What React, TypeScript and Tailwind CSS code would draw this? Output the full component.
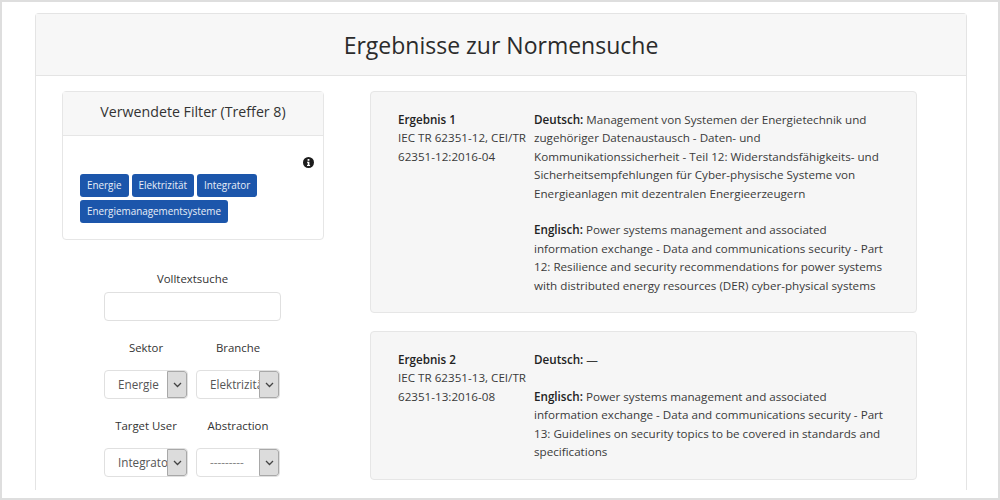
const tags = ["Energie", "Elektrizität", "Integrator", "Energiemanagementsysteme"];

function Lines({ items }: { items: string[] }) {
  return (
    <>
      {items.map((line, i) => (
        <span key={i} className="block whitespace-nowrap">
          {line}
        </span>
      ))}
    </>
  );
}

function FakeSelect({ label, value, muted }: { label: string; value: string; muted?: boolean }) {
  return (
    <div className="flex w-[84px] flex-col items-center">
      <div className="flex h-[18px] items-center whitespace-nowrap pb-[2px] text-[11.4px] text-[#333]">{label}</div>
      <div className="relative mt-[12px] h-[29px] w-[84px] overflow-hidden rounded-[4px] border border-[#e0e0e0] bg-white">
        <span className={`absolute left-[13px] top-[5px] whitespace-nowrap text-[11.7px] ${muted ? "text-[#888]" : "text-[#555]"}`}>{value}</span>
        <span className="absolute right-0 top-0 flex h-full w-[20px] items-center justify-center rounded-r-[3px] border border-[#a8a8a8] bg-[#dcdcdc]">
          <svg width="9" height="6" viewBox="0 0 9 6" fill="none" stroke="#444" strokeWidth="1.3">
            <path d="M1 1l3.5 3.5L8 1" />
          </svg>
        </span>
      </div>
    </div>
  );
}

function Result({ title, norm, de, en, enRest, className }: { title: string; norm: string[]; de: string[]; en: string; enRest: string[]; className: string }) {
  return (
    <div className={`flex rounded-[4px] border border-[#e6e6e6] bg-[#f6f6f6] pl-[27px] pt-[19px] text-[11.65px] leading-[18.4px] text-[#3a3a3a] ${className}`}>
      <div className="w-[136px] shrink-0">
        <b className="block font-semibold text-[#222]">{title}</b>
        <Lines items={norm} />
      </div>
      <div>
        <b className="font-semibold text-[#222]">Deutsch:</b> {de[0]}
        <Lines items={de.slice(1)} />
        <div className="h-[18.4px]" />
        <b className="font-semibold text-[#222]">Englisch:</b> {en}
        <Lines items={enRest} />
      </div>
    </div>
  );
}

export default function App() {
  return (
    <div className="h-[500px] w-[1000px] overflow-hidden border-2 border-[#dedede] bg-white pl-[33px] pt-[11px] font-['Open_Sans','Noto_Sans',sans-serif]">
      <div className="h-[477px] w-[932px] rounded-t-[4px] border-x border-t border-[#e4e4e4]">
        <div className="flex h-[62px] items-center justify-center border-b border-[#e4e4e4] bg-[#f7f7f7] pt-[1px] text-[23px] text-[#2b2b2b]">
          Ergebnisse zur Normensuche
        </div>
        <div className="flex pl-[26px] pt-[15px]">
          <div className="w-[262px] shrink-0">
            <div className="h-[149px] rounded-[4px] border border-[#e6e6e6]">
              <div className="flex h-[44px] items-center justify-center border-b border-[#e6e6e6] bg-[#f7f7f7] pb-[3px] text-[14.2px] text-[#333]">
                Verwendete Filter (Treffer 8)
              </div>
              <div className="flex flex-col px-[17px] pt-[21px]">
                <svg width="11" height="11" viewBox="0 0 11 11" className="-mr-[8px] self-end">
                  <circle cx="5.5" cy="5.5" r="5.5" fill="#1c1c1c" />
                  <rect x="4.6" y="2" width="1.8" height="1.8" fill="#fff" />
                  <path d="M4 4.7h2.4v3.2h.7v1H4v-1h.7V5.7H4z" fill="#fff" />
                </svg>
                <div className="mt-[6px] flex flex-wrap gap-[3px]">
                  {tags.map((t) => (
                    <span key={t} className="flex h-[23px] items-center rounded-[3px] bg-[#1c56ab] px-[7px] text-[9.9px] text-[#e8eef8]">
                      {t}
                    </span>
                  ))}
                </div>
              </div>
            </div>
            <div className="mt-[30px] flex flex-col items-center pr-[1px]">
              <div className="h-[18px] text-[11.4px] leading-[18px] text-[#333]">Volltextsuche</div>
              <div className="mt-[4px] h-[29px] w-[177px] rounded-[4px] border border-[#e0e0e0] bg-white" />
              <div className="mr-[1px] mt-[19px] flex w-[176px] justify-between">
                <FakeSelect label="Sektor" value="Energie" />
                <FakeSelect label="Branche" value="Elektrizität" />
              </div>
              <div className="mr-[1px] mt-[19px] flex w-[176px] justify-between">
                <FakeSelect label="Target User" value="Integrator" />
                <FakeSelect label="Abstraction" value="---------" muted />
              </div>
            </div>
          </div>
          <div className="ml-[46px] w-[547px]">
            <Result
              className="h-[222px]"
              title="Ergebnis 1"
              norm={["IEC TR 62351-12, CEI/TR", "62351-12:2016-04"]}
              de={["Management von Systemen der Energietechnik und", "zugehöriger Datenaustausch - Daten- und", "Kommunikationssicherheit - Teil 12: Widerstandsfähigkeits- und", "Sicherheitsempfehlungen für Cyber-physische Systeme von", "Energieanlagen mit dezentralen Energieerzeugern"]}
              en="Power systems management and associated"
              enRest={["information exchange - Data and communications security - Part", "12: Resilience and security recommendations for power systems", "with distributed energy resources (DER) cyber-physical systems"]}
            />
            <Result
              className="mt-[18px] h-[149px]"
              title="Ergebnis 2"
              norm={["IEC TR 62351-13, CEI/TR", "62351-13:2016-08"]}
              de={["—"]}
              en="Power systems management and associated"
              enRest={["information exchange - Data and communications security - Part", "13: Guidelines on security topics to be covered in standards and", "specifications"]}
            />
          </div>
        </div>
      </div>
    </div>
  );
}
